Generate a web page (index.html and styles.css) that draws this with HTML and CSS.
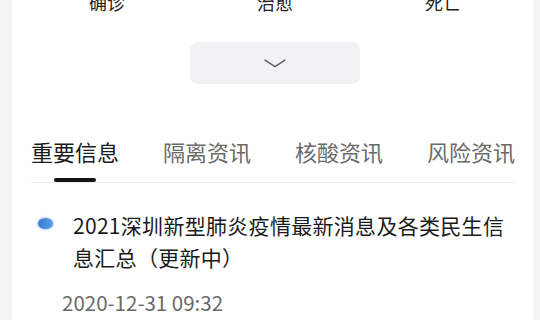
FILE: index.html
```html
<!DOCTYPE html>
<html lang="zh-CN">
<head>
<meta charset="utf-8">
<title>深圳疫情</title>
<link rel="stylesheet" href="styles.css">
</head>
<body>
<div class="card">
  <div class="stats">
    <div class="stat">确诊</div>
    <div class="stat">治愈</div>
    <div class="stat">死亡</div>
  </div>
  <div class="toggle">
    <svg class="chev" width="22" height="9" viewBox="0 0 22 9"><path d="M1 1.2 L11 7.6 L21 1.2" fill="none" stroke="#5a5a5a" stroke-width="1.4" stroke-linecap="round" stroke-linejoin="round"/></svg>
  </div>
  <div class="tabs">
    <div class="tab active">重要信息</div>
    <div class="tab">隔离资讯</div>
    <div class="tab">核酸资讯</div>
    <div class="tab">风险资讯</div>
  </div>
  <div class="item">
    <span class="dot"></span>
    <div class="title">2021深圳新型肺炎疫情最新消息及各类民生信息汇总（更新中）</div>
  </div>
  <div class="date">2020-12-31 09:32</div>
</div>
</body>
</html>
```
FILE: styles.css
```css
html, body {
  margin: 0;
  padding: 0;
}
body {
  background: #f3f3f3;
  font-family: "Noto Sans CJK SC", "Noto Sans", sans-serif;
  overflow: hidden;
  height: 320px;
}
.card {
  margin-left: 12px;
  width: 521px;
  height: 340px;
  background: #ffffff;
}
.stats {
  display: grid;
  grid-template-columns: repeat(3, 168px);
  padding-left: 11px;
  margin-top: -10px;
  font-size: 18px;
  line-height: 24px;
  color: #222;
}
.stat {
  text-align: center;
}
.toggle {
  width: 170px;
  height: 42px;
  margin: 28px 0 0 178px;
  background: #f2f1f4;
  border-radius: 8px;
  display: flex;
  align-items: center;
  justify-content: center;
}
.chev {
  display: block;
  margin-top: 1px;
}
.tabs {
  display: flex;
  gap: 44px;
  margin: 52px 18px 0 19px;
  border-bottom: 1px solid #efefef;
}
.tab {
  width: 88px;
  display: flex;
  flex-direction: column;
  align-items: center;
  font-size: 22px;
  line-height: 30px;
  color: #6a6a6a;
  white-space: nowrap;
}
.tab.active {
  color: #1c1c1c;
}
.tab.active::after {
  content: "";
  width: 42px;
  height: 4px;
  border-radius: 2px;
  background: #151515;
  margin-top: 12px;
}
.item {
  display: flex;
  align-items: flex-start;
  margin-top: 26px;
  padding-left: 26px;
  padding-right: 21px;
}
.dot {
  flex: none;
  width: 15px;
  height: 11px;
  margin-top: 9px;
  margin-right: 20px;
  border-radius: 50%;
  background: linear-gradient(90deg, #3579d8, #5f9de6);
  box-shadow: 0 0 2px 1px rgba(90, 150, 228, 0.45);
}
.title {
  font-size: 21px;
  line-height: 32px;
  letter-spacing: 0.3px;
  color: #1a1a1a;
}
.date {
  margin-top: 15px;
  padding-left: 50px;
  font-size: 20.5px;
  line-height: 28px;
  color: #6a6a6a;
}
```
